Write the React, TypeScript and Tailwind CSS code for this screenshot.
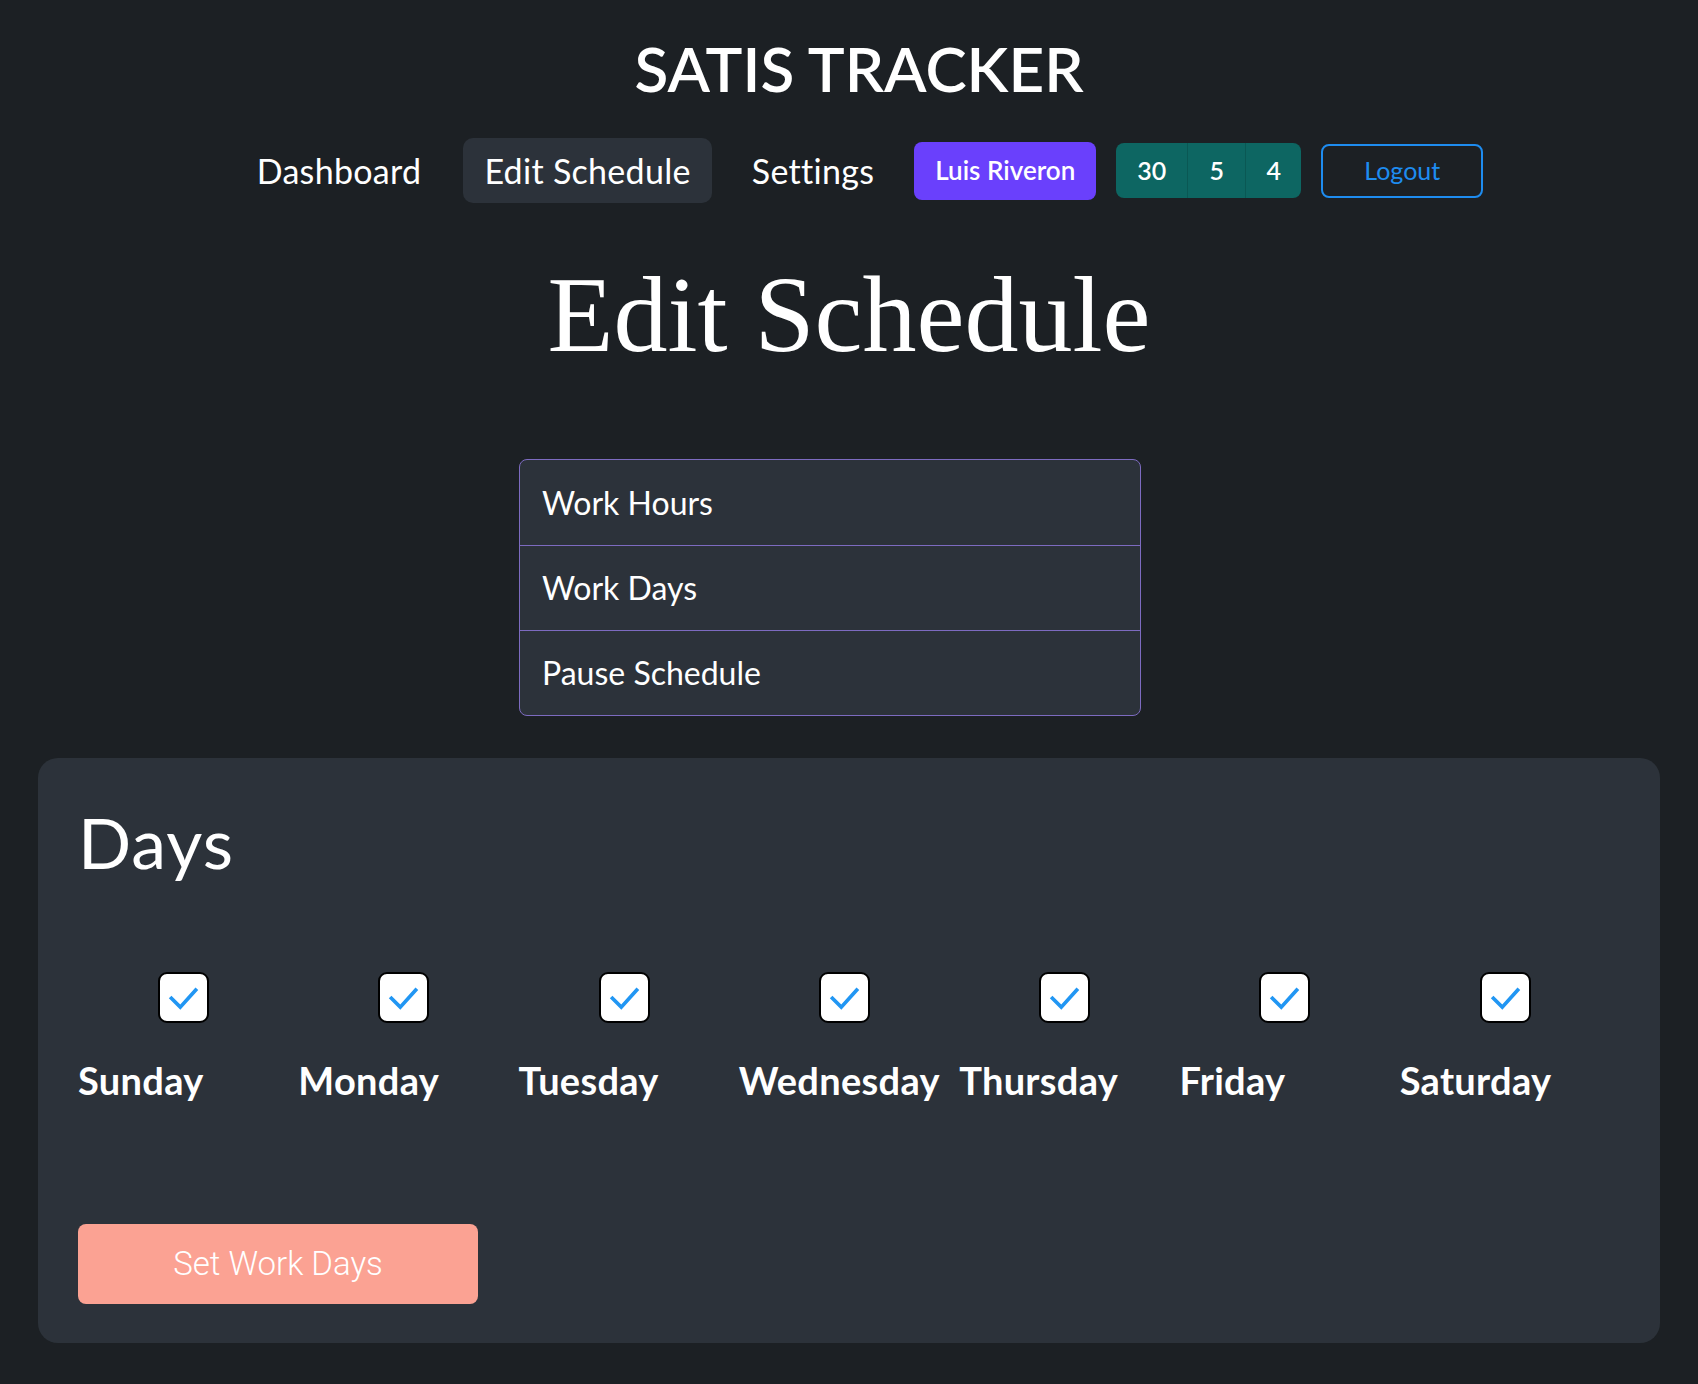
import { useState } from 'react'

const DAYS = ['Sunday', 'Monday', 'Tuesday', 'Wednesday', 'Thursday', 'Friday', 'Saturday']
const MENU = ['Work Hours', 'Work Days', 'Pause Schedule']

function CheckBox({ checked, onToggle }: { checked: boolean; onToggle: () => void }) {
  return (
    <button
      type="button"
      onClick={onToggle}
      className="ml-[80px] flex h-[51px] w-[51px] items-center justify-center rounded-[9px] border-2 border-black bg-white"
    >
      {checked && (
        <svg viewBox="0 0 51 51" className="h-[51px] w-[51px]">
          <path d="M11 25 L22 36 L40 16" fill="none" stroke="#2196f3" strokeWidth="4" />
        </svg>
      )}
    </button>
  )
}

export default function App() {
  const [days, setDays] = useState<boolean[]>(DAYS.map(() => true))

  return (
    <div className="min-h-screen bg-[#1c2024] px-[38px] pb-[41px] font-['Lato',sans-serif] text-white">
      <header className="pl-[20px] pt-[37px] text-center">
        <h1 className="text-[62px] font-semibold leading-none">SATIS TRACKER</h1>
        <nav className="mt-[39px] flex items-center justify-center gap-5 text-[34px] tracking-[0.3px]">
          <a className="flex h-[65px] items-center px-[22px]">Dashboard</a>
          <a className="flex h-[65px] items-center rounded-[10px] bg-[#2c323a] px-[21px]">Edit Schedule</a>
          <a className="flex h-[65px] items-center px-[20px]">Settings</a>
          <span className="flex h-[58px] w-[182px] items-center justify-center rounded-[8px] bg-[#6a40fc] text-[26px] font-semibold tracking-normal">
            Luis Riveron
          </span>
          <div className="flex h-[55px] overflow-hidden rounded-[8px] bg-[#0d6662] text-[25px] font-semibold tracking-normal">
            <span className="flex w-[71px] items-center justify-center">30</span>
            <span className="flex w-[58px] items-center justify-center border-l border-[#0a5854]">5</span>
            <span className="flex w-[56px] items-center justify-center border-l border-[#0a5854]">4</span>
          </div>
          <button className="flex h-[54px] w-[162px] items-center justify-center rounded-[8px] border-2 border-[#1e8cf0] text-[25px] tracking-normal text-[#1e8cf0]">
            Logout
          </button>
        </nav>
      </header>

      <h2 className="mt-[58px] text-center font-['Liberation_Serif',serif] text-[108px] leading-none">Edit Schedule</h2>

      <ul className="mt-[90px] ml-[481px] w-[622px] overflow-hidden rounded-[8px] border border-[#7d6bc0] bg-[#2c323a]">
        {MENU.map((m, i) => (
          <li
            key={m}
            className={`flex h-[85px] items-center pl-[22px] text-[32px] ${i > 0 ? 'border-t border-[#7d6bc0]' : ''}`}
          >
            {m}
          </li>
        ))}
      </ul>

      <section className="mt-[42px] rounded-[20px] bg-[#2c323a] px-[40px] pb-[39px] pt-[49px]">
        <h3 className="text-[70px] leading-none tracking-[1px]">Days</h3>
        <div className="mt-[95px] grid grid-cols-7">
          {DAYS.map((d, i) => (
            <div key={d}>
              <CheckBox
                checked={days[i]}
                onToggle={() => setDays((prev) => prev.map((v, j) => (j === i ? !v : v)))}
              />
              <p className="mt-[38px] text-[38px] font-bold leading-none tracking-[0.3px]">{d}</p>
            </div>
          ))}
        </div>
        <button className="mt-[125px] flex h-[80px] w-[400px] items-center justify-center rounded-[8px] bg-[#fba293] font-['Roboto',sans-serif] text-[33px] font-light">
          Set Work Days
        </button>
      </section>
    </div>
  )
}
